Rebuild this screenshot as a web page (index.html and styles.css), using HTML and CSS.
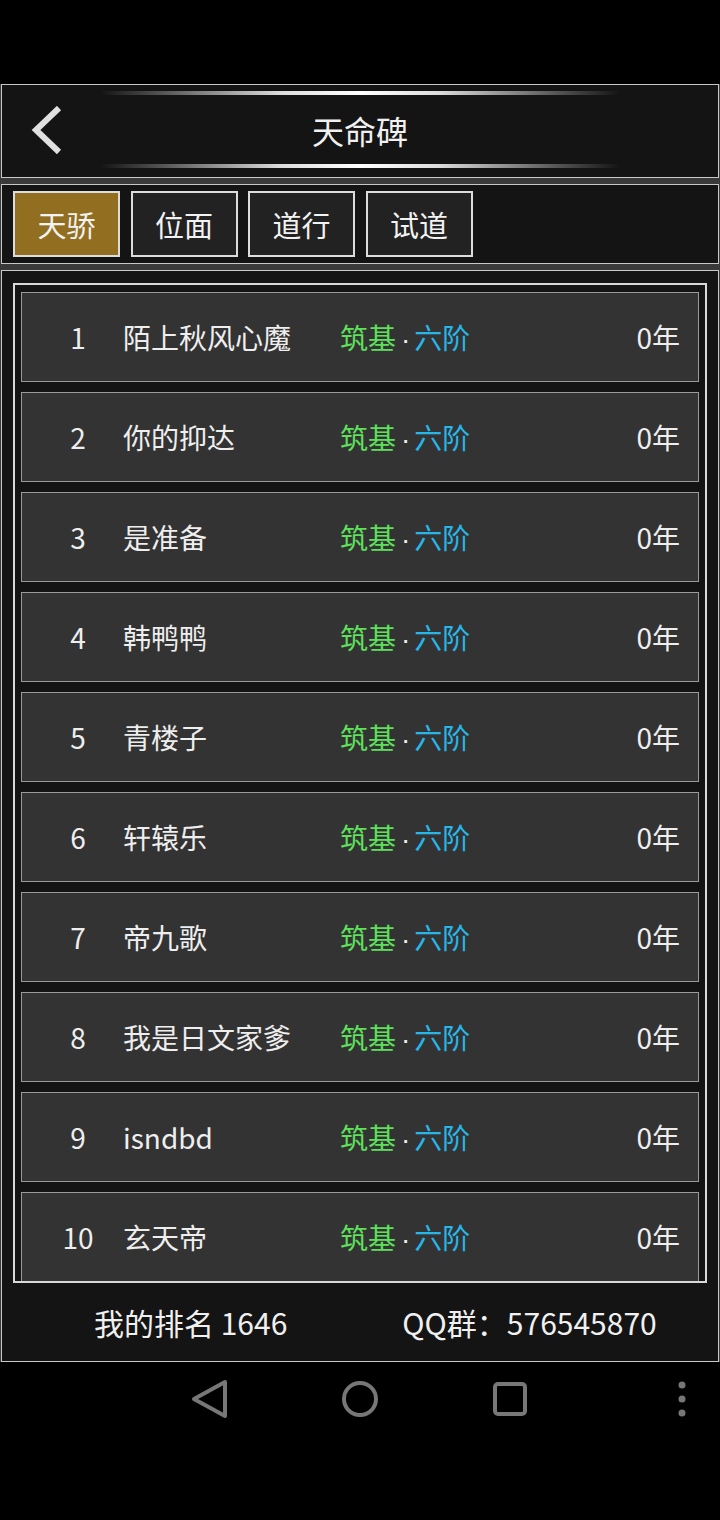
FILE: index.html
```html
<!doctype html>
<html lang="zh">
<head>
    <meta charset="utf-8">
    <title>天命碑</title>
    <link rel="stylesheet" href="styles.css">
</head>
<body>
    <div class="status"></div>

    <div class="app">
        <div class="panel header">
            <div class="back">
                <svg width="40" height="50" viewBox="0 0 40 50">
                    <polyline points="33,2 10,24 33,46" fill="none" stroke="#e0e0e0" stroke-width="6" />
                </svg>
            </div>
            <div class="title-box">
                <div class="shine"></div>
                <h1 class="title">天命碑</h1>
                <div class="shine"></div>
            </div>
            <div></div>
        </div>

        <div class="panel tabs">
            <span class="tab active">天骄</span>
            <span class="tab">位面</span>
            <span class="tab">道行</span>
            <span class="tab">试道</span>
        </div>

        <div class="panel board">
            <div class="list">
                <div class="row"><span class="rank">1</span><span class="name">陌上秋风心魔</span><span class="realm"><b class="green">筑基</b><i class="dot">·</i><b class="blue">六阶</b></span><span class="age">0年</span></div>
                <div class="row"><span class="rank">2</span><span class="name">你的抑达</span><span class="realm"><b class="green">筑基</b><i class="dot">·</i><b class="blue">六阶</b></span><span class="age">0年</span></div>
                <div class="row"><span class="rank">3</span><span class="name">是准备</span><span class="realm"><b class="green">筑基</b><i class="dot">·</i><b class="blue">六阶</b></span><span class="age">0年</span></div>
                <div class="row"><span class="rank">4</span><span class="name">韩鸭鸭</span><span class="realm"><b class="green">筑基</b><i class="dot">·</i><b class="blue">六阶</b></span><span class="age">0年</span></div>
                <div class="row"><span class="rank">5</span><span class="name">青楼子</span><span class="realm"><b class="green">筑基</b><i class="dot">·</i><b class="blue">六阶</b></span><span class="age">0年</span></div>
                <div class="row"><span class="rank">6</span><span class="name">轩辕乐</span><span class="realm"><b class="green">筑基</b><i class="dot">·</i><b class="blue">六阶</b></span><span class="age">0年</span></div>
                <div class="row"><span class="rank">7</span><span class="name">帝九歌</span><span class="realm"><b class="green">筑基</b><i class="dot">·</i><b class="blue">六阶</b></span><span class="age">0年</span></div>
                <div class="row"><span class="rank">8</span><span class="name">我是日文家爹</span><span class="realm"><b class="green">筑基</b><i class="dot">·</i><b class="blue">六阶</b></span><span class="age">0年</span></div>
                <div class="row"><span class="rank">9</span><span class="name">isndbd</span><span class="realm"><b class="green">筑基</b><i class="dot">·</i><b class="blue">六阶</b></span><span class="age">0年</span></div>
                <div class="row"><span class="rank">10</span><span class="name">玄天帝</span><span class="realm"><b class="green">筑基</b><i class="dot">·</i><b class="blue">六阶</b></span><span class="age">0年</span></div>
            </div>
            <div class="footer">
                <span>我的排名 1646</span>
                <span>QQ群：576545870</span>
            </div>
        </div>
    </div>

    <div class="navbar">
        <svg class="nav-icon" width="40" height="40" viewBox="0 0 40 40">
            <polygon points="35,3 4,20 35,37" fill="none" stroke="#777" stroke-width="4" stroke-linejoin="round" />
        </svg>
        <svg class="nav-icon" width="40" height="40" viewBox="0 0 40 40">
            <circle cx="20" cy="20" r="16" fill="none" stroke="#777" stroke-width="4" />
        </svg>
        <svg class="nav-icon" width="40" height="40" viewBox="0 0 40 40">
            <rect x="5" y="5" width="30" height="30" rx="3" fill="none" stroke="#777" stroke-width="4" />
        </svg>
        <svg class="nav-dots" width="10" height="40" viewBox="0 0 10 40">
            <circle cx="5" cy="6" r="3.5" fill="#777" />
            <circle cx="5" cy="20" r="3.5" fill="#777" />
            <circle cx="5" cy="34" r="3.5" fill="#777" />
        </svg>
    </div>
</body>
</html>
```

FILE: styles.css
```css
* {
    padding: 0;
    margin: 0;
    box-sizing: border-box;
}
body {
    background: #000;
    width: 720px;
    font-family: "Noto Sans CJK SC", "Noto Sans", sans-serif;
    color: #eee;
}
.status {
    height: 84px;
}
.app {
    background: #3a3a3a;
    padding: 0 1px;
    display: flex;
    flex-direction: column;
    gap: 6px;
}
.panel {
    background: #141414;
    border: 1px solid #c8c8c8;
}

/* header */
.header {
    height: 94px;
    display: grid;
    grid-template-columns: 98px 1fr 98px;
}
.back {
    display: flex;
    align-items: center;
    padding: 0 0 0 24px;
}
.title-box {
    display: flex;
    flex-direction: column;
    padding: 6px 0 9px;
}
.shine {
    height: 4px;
    border-radius: 2px;
    background: linear-gradient(to right, rgba(255,255,255,0), #555 12%, #ddd 35%, #fff 50%, #ddd 65%, #555 88%, rgba(255,255,255,0));
}
.title {
    flex: 1;
    display: flex;
    align-items: center;
    justify-content: center;
    font-size: 32px;
    font-weight: normal;
    color: #f0f0f0;
}

/* tabs */
.tabs {
    height: 80px;
    display: flex;
    gap: 10.5px;
    padding: 6px 11px;
}
.tab {
    width: 107px;
    height: 66px;
    border: 2px solid #dcdcdc;
    background: #222;
    display: flex;
    align-items: center;
    justify-content: center;
    font-size: 29px;
    color: #f2f2f2;
}
.tab.active {
    background: #916e20;
}

/* ranking */
.board {
    height: 1092px;
    padding: 12px 11px 0;
    display: flex;
    flex-direction: column;
}
.list {
    height: 1000px;
    border: 2px solid #d8d8d8;
    padding: 7px 6px 0;
    overflow: hidden;
}
.row {
    height: 90px;
    margin-bottom: 10px;
    background: #333;
    border: 1px solid #9a9a9a;
    display: flex;
    align-items: center;
    font-size: 28px;
}
.rank {
    width: 101px;
    padding-left: 11px;
    text-align: center;
}
.name {
    width: 217px;
}
.realm {
    flex: 1;
}
.realm b {
    font-weight: normal;
}
.dot {
    font-style: normal;
    font-family: "Liberation Sans", sans-serif;
    padding: 0 4px 0 5px;
}
.green {
    color: #5fe05c;
}
.blue {
    color: #27b6e8;
}
.age {
    padding-right: 18px;
}
.footer {
    flex: 1;
    display: flex;
    align-items: center;
    gap: 115px;
    padding: 0 0 0 81px;
    font-size: 30px;
    color: #f0f0f0;
}

/* android nav */
.navbar {
    height: 74px;
    display: flex;
    align-items: center;
    padding: 0 33px 0 190px;
    gap: 110px;
}
.nav-dots {
    margin-left: auto;
}
```
